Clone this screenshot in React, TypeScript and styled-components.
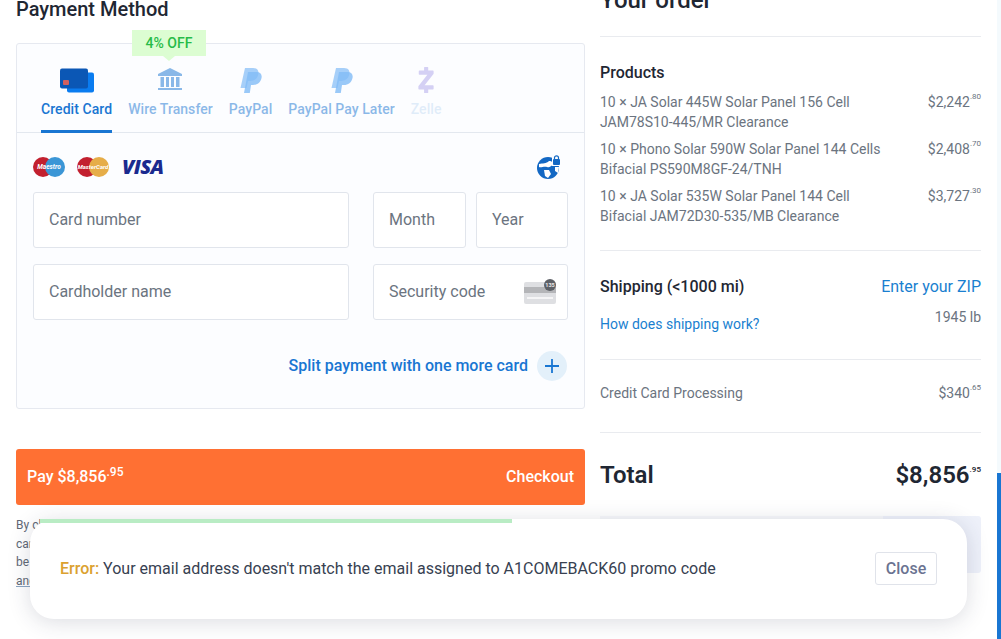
import styled, { createGlobalStyle } from "styled-components";
import { SiZelle } from "react-icons/si";

const GlobalStyle = createGlobalStyle`
  html, body { margin: 0; padding: 0; background: #fff; }
  body { font-family: Roboto, "Liberation Sans", sans-serif; }
  * { box-sizing: border-box; }
`;

const Page = styled.div`
  position: relative;
  display: flex;
  width: 1001px;
  height: 639px;
  overflow: hidden;
  background: #fff;
`;

const Content = styled.div`
  display: flex;
  gap: 15px;
  width: 997px;
  padding: 0 16px;
  align-items: flex-start;
`;

const LeftCol = styled.div`
  flex: none;
  width: 569px;
`;

const RightCol = styled.div`
  flex: none;
  width: 381px;
  margin-top: -13px;
`;

const ScrollTrack = styled.div`
  flex: none;
  width: 4px;
  height: 639px;
  padding-top: 473px;
  background: #f4fafd;
`;

const ScrollThumb = styled.div`
  height: 166px;
  background: #1976d2;
`;

const Title = styled.h2`
  margin: 0 0 32px;
  height: 11px;
  font-size: 20px;
  line-height: 20px;
  font-weight: 500;
  color: #1f2733;
  transform: translateY(-1px);
`;

const PayCard = styled.div`
  position: relative;
  height: 366px;
  border: 1px solid #e6e9f0;
  border-radius: 3px;
  background: #fcfdff;
`;

const Tabs = styled.div`
  display: flex;
  gap: 16px;
  height: 89px;
  padding-left: 24px;
  border-bottom: 1px solid #e3e8ef;
  letter-spacing: 0.06px;
`;

const Tab = styled.div<{ $active?: boolean; $faint?: boolean }>`
  display: flex;
  flex-direction: column;
  align-items: center;
  height: 89px;
  padding-top: 23px;
  font-size: 14px;
  line-height: 18px;
  font-weight: 500;
  white-space: nowrap;
  color: #1976d2;
  border-bottom: 3px solid ${(p) => (p.$active ? "#1976d2" : "transparent")};
  & > span { opacity: ${(p) => (p.$active ? 1 : p.$faint ? 0.12 : 0.5)}; }
  & > div { opacity: ${(p) => (p.$active ? 1 : p.$faint ? 0.22 : 0.5)}; }
`;

const TabIcon = styled.div`
  display: flex;
  align-items: center;
  justify-content: center;
  height: 26px;
  margin-bottom: 7px;
`;

const Badge = styled.div`
  position: absolute;
  left: 115px;
  top: -14px;
  width: 74px;
  height: 26px;
  background: #dcfdd2;
  color: #27bb48;
  font-size: 14px;
  font-weight: 500;
  line-height: 26px;
  text-align: center;
  &::after {
    content: "";
    position: absolute;
    left: 31px;
    top: 26px;
    border-left: 6px solid transparent;
    border-right: 6px solid transparent;
    border-top: 5px solid #dcfdd2;
  }
`;

const CardBody = styled.div`
  padding: 0 16px;
`;

const LogoRow = styled.div`
  display: flex;
  align-items: center;
  justify-content: space-between;
  height: 59px;
  padding-top: 8px;
  padding-right: 7px;
`;

const Logos = styled.div`
  display: flex;
  align-items: center;
  gap: 12px;
`;

const Visa = styled.span`
  margin-left: 1px;
  font-family: "Open Sans", "Liberation Sans", sans-serif;
  font-size: 20px;
  line-height: 20px;
  font-weight: 800;
  font-style: italic;
  letter-spacing: -0.6px;
  color: #1a2a8f;
`;

const FormGrid = styled.div`
  display: grid;
  grid-template-columns: 316px 195px;
  grid-auto-rows: 56px;
  column-gap: 24px;
  row-gap: 16px;
`;

const DatePair = styled.div`
  display: grid;
  grid-template-columns: 93px 92px;
  column-gap: 10px;
`;

const Field = styled.div`
  display: flex;
  align-items: center;
  justify-content: space-between;
  padding: 0 10px 2px 15px;
  background: #fff;
  border: 1px solid #e1e5ec;
  border-radius: 3px;
  font-size: 16px;
  color: #6b7480;
`;

const SplitRow = styled.div`
  display: flex;
  align-items: center;
  justify-content: flex-end;
  gap: 9px;
  margin-top: 31px;
  padding-right: 1px;
  font-size: 16px;
  font-weight: 500;
  color: #1976d2;
  span:first-child { padding-bottom: 2px; }
`;

const PlusCircle = styled.span`
  display: flex;
  align-items: center;
  justify-content: center;
  width: 30px;
  height: 30px;
  border-radius: 50%;
  background: #e3f0fa;
`;

const PayButton = styled.div`
  display: flex;
  align-items: center;
  justify-content: space-between;
  height: 56px;
  margin-top: 40px;
  padding: 0 11px 2px;
  background: #ff7033;
  border-radius: 3px;
  font-size: 16px;
  font-weight: 500;
  color: #fff;
  sup { font-size: 12px; line-height: 0; }
`;

const Legal = styled.p`
  margin: 11px 0 0;
  font-size: 12px;
  line-height: 18.5px;
  color: #5f6875;
  u { text-decoration-color: #8aa4c0; }
`;

const OrderTitle = styled.h2`
  margin: 0;
  height: 49px;
  font-size: 24px;
  line-height: 26px;
  font-weight: 500;
  color: #1f2733;
`;

const Section = styled.div<{ $h: number }>`
  height: ${(p) => p.$h}px;
  border-top: 1px solid #e9ebef;
`;

const ProductsBody = styled.div`
  padding-top: 26px;
`;

const SectionHead = styled.div`
  font-size: 16px;
  font-weight: 500;
  line-height: 20px;
  color: #1f2733;
`;

const ItemList = styled.div`
  margin-top: 10px;
`;

const ItemRow = styled.div`
  display: flex;
  justify-content: space-between;
  align-items: flex-start;
  margin-bottom: 8px;
  font-size: 14px;
  line-height: 19.5px;
  color: #6b7480;
`;

const ItemName = styled.div`
  width: 300px;
`;

const Price = styled.span`
  white-space: nowrap;
  sup { font-size: 8px; line-height: 0; vertical-align: 8px; }
`;

const SplitLine = styled.div<{ $top?: number }>`
  display: flex;
  justify-content: space-between;
  align-items: flex-start;
  padding-top: ${(p) => p.$top ?? 0}px;
`;

const Link = styled.span<{ $big?: boolean }>`
  font-size: ${(p) => (p.$big ? 16 : 14)}px;
  color: #1a7fd0;
`;

const LinkBelow = styled(Link)`
  padding-top: 7px;
`;

const Muted = styled.span`
  font-size: 14px;
  color: #6b7480;
`;

const TotalRow = styled.div`
  display: flex;
  justify-content: space-between;
  align-items: center;
  padding-top: 27px;
  font-size: 24px;
  line-height: 30px;
  font-weight: 600;
  color: #1f2733;
  sup { font-size: 8px; line-height: 0; vertical-align: 11px; }
`;

const PromoRow = styled.div`
  display: flex;
  height: 57px;
  margin-top: 15px;
`;

const PromoInput = styled.div`
  flex: 1;
  background: #f7f8fb;
`;

const PromoButton = styled.div`
  width: 98px;
  background: #eef1fa;
  border-radius: 0 3px 3px 0;
`;

const Toast = styled.div`
  position: absolute;
  left: 30px;
  top: 519px;
  display: flex;
  align-items: center;
  justify-content: space-between;
  width: 937px;
  height: 100px;
  padding: 0 30px 2px;
  background: #fff;
  border-radius: 24px;
  box-shadow: 0 3px 22px rgba(40, 50, 80, 0.17);
  font-size: 16px;
  color: #374151;
`;

const ToastBar = styled.div`
  position: absolute;
  left: 10px;
  top: 0;
  height: 4px;
  background: #b9ecc4;
`;

const ErrorLabel = styled.b`
  font-weight: 500;
  color: #dba12f;
`;

const CloseButton = styled.div`
  display: flex;
  align-items: center;
  justify-content: center;
  width: 62px;
  height: 33px;
  border: 1px solid #e0e3ea;
  border-radius: 3px;
  font-size: 16px;
  font-weight: 500;
  color: #6b7391;
`;

const CardIcon = () => (
  <svg width="36" height="25" viewBox="0 0 36 25">
    <rect x="8" y="4.5" width="27" height="20" rx="2" fill="#0a7cf0" />
    <rect x="1" y="0.5" width="28" height="20" rx="2" fill="#0b57b5" />
    <rect x="4" y="12" width="6" height="5" rx="1" fill="#d2605f" />
  </svg>
);

const BankIcon = () => (
  <svg width="26" height="24" viewBox="0 0 26 24" fill="#1976d2">
    <path d="M13 0 L25 6 V8 H1 V6 Z" />
    <rect x="3.5" y="9" width="3.5" height="10" />
    <rect x="9" y="9" width="3" height="10" />
    <rect x="14" y="9" width="3" height="10" />
    <rect x="19" y="9" width="3.5" height="10" />
    <rect x="1" y="20" width="24" height="2" />
  </svg>
);

const PayPalIcon = () => (
  <svg width="22" height="25" viewBox="0 0 22 25" fill="#0a7cf0">
    <path opacity="0.7" d="M5 0 H13 C17.5 0 19 2.8 18.3 6.3 C17.5 10.8 14 13 10 13 H8 L6.5 20 H0.5 Z" />
    <path opacity="0.8" d="M8 4 H16.5 C20.5 4 22.3 6.6 21.5 10 C20.6 14.6 17 17 13 17 H11 L9.8 25 H4 Z" />
  </svg>
);

const MaestroLogo = () => (
  <svg width="32" height="20" viewBox="0 0 32 20">
    <circle cx="10" cy="10" r="10" fill="#c2202f" />
    <circle cx="22" cy="10" r="10" fill="#3b96d6" />
    <text x="16" y="12" textAnchor="middle" fontSize="6.5" fontStyle="italic" fontWeight="700" fill="#fff" fontFamily="Roboto, sans-serif">Maestro</text>
  </svg>
);

const MasterLogo = () => (
  <svg width="32" height="20" viewBox="0 0 32 20">
    <circle cx="10" cy="10" r="10" fill="#c2202f" />
    <circle cx="22" cy="10" r="10" fill="#e6ad48" />
    <text x="16" y="12" textAnchor="middle" fontSize="6" fontStyle="italic" fontWeight="700" fill="#fff" fontFamily="Roboto, sans-serif">MasterCard</text>
  </svg>
);

const SecureIcon = () => (
  <svg width="24" height="24" viewBox="0 0 24 24">
    <circle cx="11" cy="13" r="11" fill="#1368c4" />
    <path d="M2 9 C6 8 9 9 12 6 C15 6 17 8 16 10 C13 11 13 13 10 12 C7 11 4 13 2 12 Z" fill="#fff" />
    <path d="M7 15 L12 15 L14 19 L11 23 L8 21 Z" fill="#fff" />
    <path d="M18 12 L22 12 L21 18 L18 16 Z" fill="#fff" />
    <rect x="15" y="0" width="9" height="11" fill="#fcfdff" />
    <rect x="16" y="4" width="7" height="6" rx="1" fill="#1368c4" />
    <path d="M17.5 4 V2.8 A2 2 0 0 1 21.5 2.8 V4" fill="none" stroke="#1368c4" strokeWidth="1.2" />
  </svg>
);

const CvvIcon = () => (
  <svg width="33" height="25" viewBox="0 0 33 25">
    <rect x="0" y="3" width="32" height="22" rx="2" fill="#dedfe2" />
    <rect x="0" y="8" width="32" height="6" fill="#b4b5b8" />
    <rect x="3" y="18" width="26" height="2" fill="#f5f5f6" />
    <circle cx="26" cy="6" r="6" fill="#5d6066" />
    <text x="26" y="8" textAnchor="middle" fontSize="5.5" fontWeight="700" fill="#e8e8e8" fontFamily="Roboto, sans-serif">135</text>
  </svg>
);

const PlusIcon = () => (
  <svg width="14" height="14" viewBox="0 0 14 14">
    <path d="M7 0 V14 M0 7 H14" stroke="#1976d2" strokeWidth="1.8" />
  </svg>
);

const products = [
  { lines: ["10 × JA Solar 445W Solar Panel 156 Cell", "JAM78S10-445/MR Clearance"], price: "$2,242", cents: ".80" },
  { lines: ["10 × Phono Solar 590W Solar Panel 144 Cells", "Bifacial PS590M8GF-24/TNH"], price: "$2,408", cents: ".70" },
  { lines: ["10 × JA Solar 535W Solar Panel 144 Cell", "Bifacial JAM72D30-535/MB Clearance"], price: "$3,727", cents: ".30" },
];

export default function App() {
  return (
    <Page>
      <GlobalStyle />
      <Content>
        <LeftCol>
          <Title>Payment Method</Title>
          <PayCard>
            <Badge>4% OFF</Badge>
            <Tabs>
              <Tab $active>
                <TabIcon><CardIcon /></TabIcon>
                <span>Credit Card</span>
              </Tab>
              <Tab>
                <TabIcon><BankIcon /></TabIcon>
                <span>Wire Transfer</span>
              </Tab>
              <Tab>
                <TabIcon><PayPalIcon /></TabIcon>
                <span>PayPal</span>
              </Tab>
              <Tab>
                <TabIcon><PayPalIcon /></TabIcon>
                <span>PayPal Pay Later</span>
              </Tab>
              <Tab $faint>
                <TabIcon><SiZelle size={26} color="#4a35d0" /></TabIcon>
                <span>Zelle</span>
              </Tab>
            </Tabs>
            <CardBody>
              <LogoRow>
                <Logos>
                  <MaestroLogo />
                  <MasterLogo />
                  <Visa>VISA</Visa>
                </Logos>
                <SecureIcon />
              </LogoRow>
              <FormGrid>
                <Field>Card number</Field>
                <DatePair>
                  <Field>Month</Field>
                  <Field>Year</Field>
                </DatePair>
                <Field>Cardholder name</Field>
                <Field>Security code<CvvIcon /></Field>
              </FormGrid>
              <SplitRow>
                <span>Split payment with one more card</span>
                <PlusCircle><PlusIcon /></PlusCircle>
              </SplitRow>
            </CardBody>
          </PayCard>
          <PayButton>
            <span>Pay $8,856<sup>.95</sup></span>
            <span>Checkout</span>
          </PayButton>
          <Legal>
            By clicking Checkout you agree to our terms<br />
            card details are processed securely and<br />
            be charged when the order is placed<br />
            <u>and conditions of sale</u>
          </Legal>
        </LeftCol>
        <RightCol>
          <OrderTitle>Your order</OrderTitle>
          <Section $h={214}>
            <ProductsBody>
              <SectionHead>Products</SectionHead>
              <ItemList>
                {products.map((item) => (
                  <ItemRow key={item.price}>
                    <ItemName>{item.lines[0]}<br />{item.lines[1]}</ItemName>
                    <Price>{item.price}<sup>{item.cents}</sup></Price>
                  </ItemRow>
                ))}
              </ItemList>
            </ProductsBody>
          </Section>
          <Section $h={109}>
            <SplitLine $top={26}>
              <SectionHead>Shipping (&lt;1000 mi)</SectionHead>
              <Link $big>Enter your ZIP</Link>
            </SplitLine>
            <SplitLine $top={12}>
              <LinkBelow>How does shipping work?</LinkBelow>
              <Muted>1945 lb</Muted>
            </SplitLine>
          </Section>
          <Section $h={73}>
            <SplitLine $top={25}>
              <Muted>Credit Card Processing</Muted>
              <Muted><Price>$340<sup>.65</sup></Price></Muted>
            </SplitLine>
          </Section>
          <Section $h={69}>
            <TotalRow>
              <span>Total</span>
              <span>$8,856<sup>.95</sup></span>
            </TotalRow>
          </Section>
          <PromoRow>
            <PromoInput />
            <PromoButton />
          </PromoRow>
        </RightCol>
      </Content>
      <ScrollTrack><ScrollThumb /></ScrollTrack>
      <Toast>
        <ToastBar style={{ width: 472 }} />
        <span><ErrorLabel>Error:</ErrorLabel> Your email address doesn't match the email assigned to A1COMEBACK60 promo code</span>
        <CloseButton>Close</CloseButton>
      </Toast>
    </Page>
  );
}
